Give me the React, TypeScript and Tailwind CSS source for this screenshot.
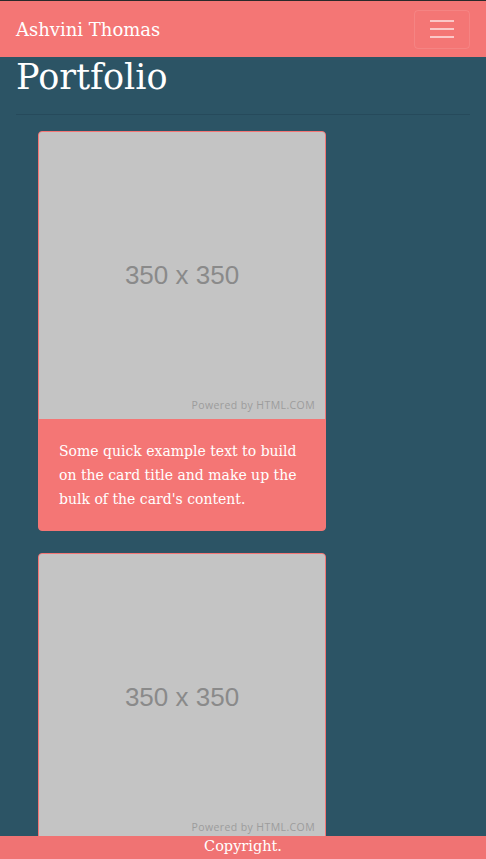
import React from "react";

const serif = { fontFamily: '"DejaVu Serif", "Liberation Serif", serif' };

function Placeholder() {
  return (
    <div className="relative flex h-[287px] w-full items-center justify-center bg-[#c4c4c4]">
      <span
        className="text-[26px] text-[#8a8a8a]"
        style={{ fontFamily: '"Liberation Sans", Arial, sans-serif' }}
      >
        350 x 350
      </span>
      <span
        className="absolute bottom-[5px] right-[10px] text-[10.5px] tracking-[0.4px] text-[#9c9c9c]"
        style={{ fontFamily: '"Open Sans", "DejaVu Sans", sans-serif' }}
      >
        Powered by HTML.COM
      </span>
    </div>
  );
}

function Card({ withBody }: { withBody: boolean }) {
  return (
    <div className="w-[288px] overflow-hidden rounded-[4px] border border-[#f47675] bg-[#f47675]">
      <Placeholder />
      {withBody && (
        <div className="px-[20px] pb-[19px] pt-[20px] text-[14px] leading-[24px] text-white">
          Some quick example text to build on the card title and make up the
          bulk of the card's content.
        </div>
      )}
    </div>
  );
}

export default function App() {
  return (
    <div className="min-h-screen border-t border-[#2a2a2a] bg-[#2c5465]" style={serif}>
      <nav className="flex h-[56px] items-center justify-between bg-[#f47675] pl-[16px] pr-[16px]">
        <span className="text-[18px] text-white">Ashvini Thomas</span>
        <button className="flex h-[39px] w-[56px] flex-col items-center justify-center gap-[6px] rounded-[4px] border border-white/10">
          <span className="block h-[2px] w-[24px] bg-white/60" />
          <span className="block h-[2px] w-[24px] bg-white/60" />
          <span className="block h-[2px] w-[24px] bg-white/60" />
        </button>
      </nav>
      <div className="px-[16px]">
        <h1 className="text-[35px] leading-[40px] text-white">Portfolio</h1>
        <hr className="mt-[17px] border-t border-[#264a5b]" />
        <div className="flex flex-col gap-[22px] pb-[40px] pl-[22px] pt-[16px]">
          <Card withBody />
          <Card withBody />
        </div>
      </div>
      <footer className="fixed bottom-0 left-0 right-0 h-[23px] bg-[#f07373] text-center text-[14.5px] leading-[21px] text-white">
        Copyright.
      </footer>
    </div>
  );
}
